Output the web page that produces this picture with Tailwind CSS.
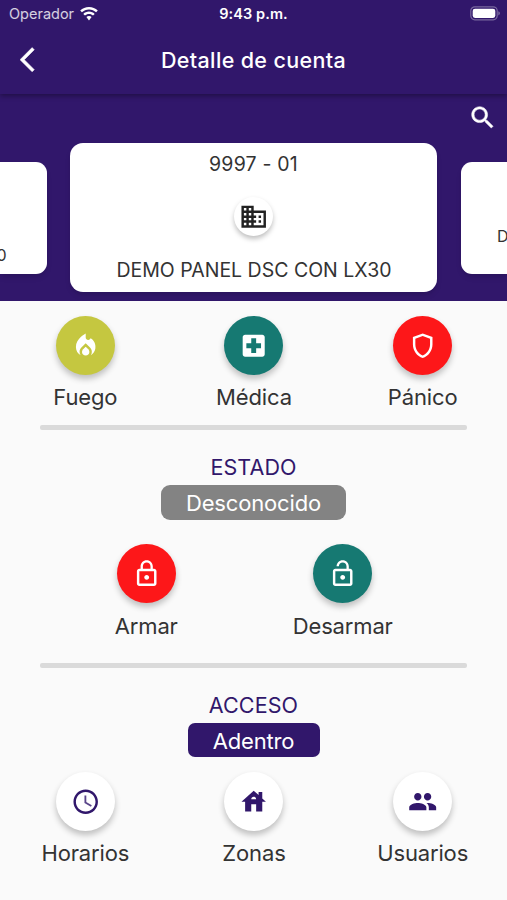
<!DOCTYPE html>
<html lang="es">
<head>
<meta charset="utf-8">
<meta name="viewport" content="width=device-width, initial-scale=1">
<title>Detalle de cuenta</title>
<script src="https://cdn.jsdelivr.net/npm/@tailwindcss/browser@4"></script>
</head>
<body class="w-[507px] h-[900px] overflow-hidden bg-[#fafafa] font-['Inter',sans-serif] text-[#333]">
<div class="flex flex-col h-[900px]">
  <header class="relative z-10 h-[94px] bg-[#31176b] text-white shadow-[0_2px_5px_rgba(0,0,0,0.35)]">
    <div class="grid grid-cols-3 items-center h-[28px] px-[7px] text-[14.5px] leading-[28px]">
      <div class="flex items-center gap-[6px] pl-[2px] text-white/80">
        <span>Operador</span>
        <svg class="w-[18px] h-[14px] fill-white" viewBox="0 0 18 14"><path d="M9 0C5.6 0 2.5 1.3.2 3.5l1.700 1.800C3.700 3.600 6.200 2.500 9 2.500s5.300 1.100 7.100 2.800l1.700-1.800C15.500 1.300 12.400 0 9 0zM9 4.600c-2.200 0-4.200.9-5.700 2.300L5 8.600c1-1 2.400-1.600 4-1.600s3 .6 4 1.600l1.700-1.700C13.200 5.500 11.200 4.600 9 4.600zM9 9c-1 0-1.900.4-2.600 1.100L9 13.500l2.600-3.400C10.900 9.400 10 9 9 9z"/></svg>
      </div>
      <div class="text-center font-semibold whitespace-nowrap tracking-[0.1px]">9:43 p.m.</div>
      <div class="flex justify-end items-center">
        <svg class="w-[31px] h-[15px] -mt-[2px] -mr-px" viewBox="0 0 31 15"><rect x=".8" y=".8" width="26.400" height="13" rx="4" fill="none" stroke="#fff" stroke-opacity=".35" stroke-width="1.200"/><rect x="2.700" y="2.700" width="22.600" height="9.200" rx="2.300" fill="#fff"/><path d="M28.500 5.200c1.600.6 1.600 3.600 0 4.200z" fill="#fff" fill-opacity=".5"/></svg>
      </div>
    </div>
    <div class="grid grid-cols-[60px_1fr_60px] items-center h-[64px]">
      <svg class="ml-[20px] w-[29.400px] h-[29.400px] fill-white stroke-white [stroke-width:0.4]" viewBox="0 0 24 24"><path d="M11.670 3.870L9.900 2.100 0 12l9.900 9.900 1.770-1.770L3.540 12z"/></svg>
      <h1 class="text-center text-[21.500px] font-medium tracking-[0.35px] whitespace-nowrap">Detalle de cuenta</h1>
    </div>
  </header>

  <section class="h-[207px] bg-[#31176b]">
    <div class="flex justify-end h-[48.500px] pt-[9px] pr-[10px]">
      <svg class="w-[29.400px] h-[29.400px] fill-white stroke-white [stroke-width:0.4]" viewBox="0 0 24 24"><path d="M15.500 14h-.79l-.28-.27C15.410 12.590 16 11.110 16 9.500 16 5.910 13.090 3 9.500 3S3 5.910 3 9.500 5.910 16 9.500 16c1.610 0 3.090-.59 4.230-1.570l.27.28v.79l5 4.990L20.490 19l-4.990-5zm-6 0C7.010 14 5 11.990 5 9.500S7.010 5 9.500 5 14 7.010 14 9.500 11.990 14 9.500 14z"/></svg>
    </div>
    <div class="flex items-center justify-between h-[149px] text-[16px]">
      <div class="flex items-end justify-end w-[47px] h-[112px] mt-px rounded-r-[11px] bg-white shadow-md pr-[40.500px] pb-[7px]">0</div>
      <article class="flex flex-col items-center justify-between w-[367px] h-[149px] -ml-px rounded-[13px] bg-white shadow-md px-4 pt-[7px] pb-[8px] text-[19.500px] leading-[28px]">
        <div class="tracking-[0.2px]">9997 - 01</div>
        <div class="flex items-center justify-center size-[39px] rounded-full bg-white shadow-[0_3px_5px_rgba(0,0,0,0.25)]">
          <svg class="w-[29.400px] h-[29.400px] fill-[#222]" viewBox="0 0 24 24"><path d="M12 7V3H2v18h20V7H12zM6 19H4v-2h2v2zm0-4H4v-2h2v2zm0-4H4V9h2v2zm0-4H4V5h2v2zm4 12H8v-2h2v2zm0-4H8v-2h2v2zm0-4H8V9h2v2zm0-4H8V5h2v2zm10 12h-8v-2h2v-2h-2v-2h2v-2h-2V9h8v10zm-2-8h-2v2h2v-2zm0 4h-2v2h2v-2z"/></svg>
        </div>
        <div class="whitespace-nowrap pl-px">DEMO PANEL DSC CON LX30</div>
      </article>
      <div class="flex items-end w-[46px] h-[112px] mt-px rounded-l-[11px] bg-white shadow-md pl-[36px] pb-[26px] overflow-hidden">D</div>
    </div>
  </section>

  <main class="flex flex-col text-[22px] leading-[30px] tracking-[-0.15px]">
    <div class="grid grid-cols-3 pt-[15px] pl-px h-[124px]">
      <div class="flex flex-col items-center gap-[7px]">
        <button class="flex items-center justify-center size-[59px] rounded-full bg-[#c5c740] shadow-[0_4px_6px_rgba(0,0,0,0.24)]"><svg class="w-[29.400px] h-[29.400px] fill-white" viewBox="0 0 24 24"><path d="M12 12.900l-2.130 2.090c-.56.56-.87 1.290-.87 2.070C9 18.680 10.350 20 12 20s3-1.320 3-2.940c0-.78-.31-1.520-.87-2.070L12 12.900z"/><path d="M16 6l-.44.55C14.380 8.020 12 7.190 12 5.300V2S4 6 4 13c0 2.920 1.560 5.470 3.890 6.860-.56-.79-.89-1.760-.89-2.800 0-1.320.52-2.560 1.470-3.500L12 10.100l3.530 3.470c.95.93 1.470 2.170 1.470 3.500 0 1.020-.31 1.960-.85 2.750 1.890-1.150 3.290-3.060 3.710-5.300.66-3.550-1.070-6.900-3.860-8.520z"/></svg></button>
        <span>Fuego</span>
      </div>
      <div class="flex flex-col items-center gap-[7px]">
        <button class="flex items-center justify-center size-[59px] rounded-full bg-[#167972] shadow-[0_4px_6px_rgba(0,0,0,0.24)]"><svg class="w-[29.400px] h-[29.400px] fill-white" viewBox="0 0 24 24"><path d="M19 3H5c-1.100 0-1.990.9-1.990 2L3 19c0 1.100.9 2 2 2h14c1.100 0 2-.9 2-2V5c0-1.100-.9-2-2-2zm-1 11h-4v4h-4v-4H6v-4h4V6h4v4h4v4z"/></svg></button>
        <span>Médica</span>
      </div>
      <div class="flex flex-col items-center gap-[7px]">
        <button class="flex items-center justify-center size-[59px] rounded-full bg-[#fd1719] shadow-[0_4px_6px_rgba(0,0,0,0.24)]"><svg class="w-[29.400px] h-[29.400px] fill-white" viewBox="0 0 24 24"><path d="M12 2L4 5v6.090c0 5.050 3.410 9.760 8 10.910 4.590-1.150 8-5.860 8-10.910V5l-8-3zm6 9.090c0 4-2.550 7.700-6 8.830-3.450-1.130-6-4.820-6-8.830v-4.700l6-2.250 6 2.250v4.700z"/></svg></button>
        <span>Pánico</span>
      </div>
    </div>
    <hr class="h-[5px] mx-[40px] border-0 rounded-[2px] bg-[#dadada]">

    <section class="flex flex-col items-center h-[233px] pt-[22px]">
      <h2 class="h-[33px] text-[#31176b] text-[21.500px] tracking-[0.1px]">ESTADO</h2>
      <div class="flex items-center justify-center w-[185px] h-[35px] rounded-[9px] bg-[#838383] text-white">Desconocido</div>
      <div class="flex w-full justify-center pt-[24px]">
        <div class="flex flex-col items-center gap-[8px] w-[196.500px] -ml-[18px]">
          <button class="flex items-center justify-center size-[59px] rounded-full bg-[#fd1719] shadow-[0_4px_6px_rgba(0,0,0,0.24)]"><svg class="w-[29.400px] h-[29.400px] fill-white" viewBox="0 0 24 24"><path d="M18 8h-1V6c0-2.760-2.240-5-5-5S7 3.240 7 6v2H6c-1.100 0-2 .9-2 2v10c0 1.100.9 2 2 2h12c1.100 0 2-.9 2-2V10c0-1.100-.9-2-2-2zM8.900 6c0-1.710 1.390-3.100 3.100-3.100s3.100 1.390 3.100 3.100v2H8.900V6zM18 20H6V10h12v10zm-6-3c1.100 0 2-.9 2-2s-.9-2-2-2-2 .9-2 2 .9 2 2 2z"/></svg></button>
          <span>Armar</span>
        </div>
        <div class="flex flex-col items-center gap-[8px] w-[196.500px]">
          <button class="flex items-center justify-center size-[59px] rounded-full bg-[#167972] shadow-[0_4px_6px_rgba(0,0,0,0.24)]"><svg class="w-[29.400px] h-[29.400px] fill-white" viewBox="0 0 24 24"><path d="M12 17c1.100 0 2-.9 2-2s-.9-2-2-2-2 .9-2 2 .9 2 2 2zm6-9h-1V6c0-2.760-2.240-5-5-5S7 3.240 7 6h1.900c0-1.710 1.390-3.100 3.100-3.100s3.100 1.390 3.100 3.100v2H6c-1.100 0-2 .9-2 2v10c0 1.100.9 2 2 2h12c1.100 0 2-.9 2-2V10c0-1.100-.9-2-2-2zm0 12H6V10h12v10z"/></svg></button>
          <span>Desarmar</span>
        </div>
      </div>
    </section>
    <hr class="h-[5px] mx-[40px] border-0 rounded-[2px] bg-[#dadada]">

    <section class="flex flex-col items-center pt-[22px]">
      <h2 class="h-[33px] text-[#31176b] text-[21.500px] tracking-[0.1px]">ACCESO</h2>
      <div class="flex items-center justify-center w-[132px] h-[34px] pt-px rounded-[7px] bg-[#31176b] text-white">Adentro</div>
      <div class="grid grid-cols-3 w-full pt-[15px] pl-px">
        <div class="flex flex-col items-center gap-[7px]">
          <button class="flex items-center justify-center size-[59px] rounded-full bg-white shadow-[0_4px_6px_rgba(0,0,0,0.24)]"><svg class="w-[29.400px] h-[29.400px] fill-[#31176b]" viewBox="0 0 24 24"><path d="M11.990 2C6.470 2 2 6.480 2 12s4.470 10 9.990 10C17.520 22 22 17.520 22 12S17.520 2 11.990 2zM12 20c-4.420 0-8-3.580-8-8s3.580-8 8-8 8 3.580 8 8-3.580 8-8 8z"/><path fill-opacity=".8" d="M12.500 7H11v6l5.250 3.150.75-1.230-4.500-2.670z"/></svg></button>
          <span>Horarios</span>
        </div>
        <div class="flex flex-col items-center gap-[7px]">
          <button class="flex items-center justify-center size-[59px] rounded-full bg-white shadow-[0_4px_6px_rgba(0,0,0,0.24)]"><svg class="w-[29.400px] h-[29.400px] fill-[#31176b]" viewBox="0 0 24 24"><path d="M19 9.300V4h-3v2.600L12 3 2 12h3v8h5v-6h4v6h5v-8h3l-3-2.700zm-9 .7c0-1.100.9-2 2-2s2 .9 2 2h-4z"/></svg></button>
          <span>Zonas</span>
        </div>
        <div class="flex flex-col items-center gap-[7px]">
          <button class="flex items-center justify-center size-[59px] rounded-full bg-white shadow-[0_4px_6px_rgba(0,0,0,0.24)]"><svg class="w-[29.400px] h-[29.400px] fill-[#31176b]" viewBox="0 0 24 24"><path d="M16 11c1.660 0 2.990-1.340 2.990-3S17.660 5 16 5s-3 1.340-3 3 1.340 3 3 3zm-8 0c1.660 0 2.990-1.340 2.990-3S9.660 5 8 5 5 6.340 5 8s1.340 3 3 3zm0 2c-2.330 0-7 1.170-7 3.500V19h14v-2.500c0-2.330-4.670-3.500-7-3.500zm8 0c-.29 0-.62.020-.97.050 1.160.84 1.970 1.970 1.970 3.450V19h6v-2.500c0-2.330-4.670-3.500-7-3.500z"/></svg></button>
          <span>Usuarios</span>
        </div>
      </div>
    </section>
  </main>
</div>
</body>
</html>
